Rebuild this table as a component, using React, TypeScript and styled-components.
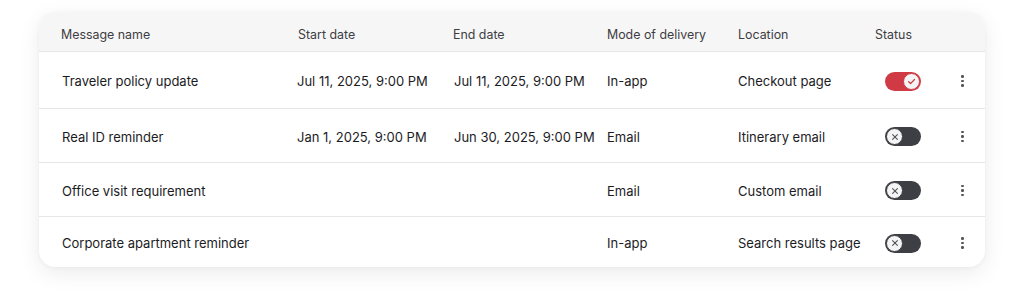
import React from 'react';
import styled, { createGlobalStyle, css } from 'styled-components';

const GlobalStyle = createGlobalStyle`
  html, body {
    margin: 0;
    padding: 0;
    background: #ffffff;
    font-family: Inter, "Noto Sans", "Liberation Sans", sans-serif;
    -webkit-font-smoothing: antialiased;
  }
`;

const Page = styled.div`
  width: 1024px;
  height: 303px;
  box-sizing: border-box;
  padding: 12px 39px 0 39px;
`;

const Card = styled.div`
  background: #fff;
  border-radius: 16px;
  overflow: hidden;
  box-shadow: 0 6px 22px rgba(0, 0, 0, 0.08), 0 1px 4px rgba(0, 0, 0, 0.04);
`;

const columns = '237px 155px 154px 131px 137px 86px 1fr';

const HeaderRow = styled.div`
  display: grid;
  grid-template-columns: ${columns};
  align-items: center;
  box-sizing: border-box;
  height: 40px;
  padding: 5px 0 0 22px;
  background: #f6f6f7;
  border-bottom: 1px solid #e6e6e8;
`;

const HeaderCell = styled.div`
  font-size: 12.4px;
  color: #3d3d42;
  white-space: nowrap;
`;

const Row = styled.div<{ $last?: boolean; $height: number }>`
  display: grid;
  grid-template-columns: ${columns};
  align-items: center;
  box-sizing: border-box;
  height: ${({ $height }) => $height}px;
  padding: 2px 0 0 22px;
  ${({ $last }) =>
    !$last &&
    css`
      border-bottom: 1px solid #e6e6e8;
    `}
`;

const Cell = styled.div<{ $shift?: number }>`
  font-size: 13px;
  color: #1c1c1f;
  white-space: nowrap;
  margin-left: ${({ $shift }) => $shift ?? 0}px;
`;

const Toggle = styled.div<{ $on: boolean }>`
  position: relative;
  width: 36px;
  height: 19px;
  margin-left: 10px;
  border-radius: 10px;
  background: ${({ $on }) => ($on ? '#cf3a44' : '#3e3f44')};
`;

const Knob = styled.div<{ $on: boolean }>`
  position: absolute;
  top: 1px;
  ${({ $on }) => ($on ? 'right: 1px;' : 'left: 1px;')}
  width: 17px;
  height: 17px;
  box-sizing: border-box;
  border-radius: 50%;
  background: #f4f4f5;
  border: 1.5px solid ${({ $on }) => ($on ? '#cf3a44' : '#3e3f44')};
  display: flex;
  align-items: center;
  justify-content: center;
`;

const Kebab = styled.div`
  display: flex;
  flex-direction: column;
  align-items: center;
  gap: 2px;
  width: 3px;
  span {
    width: 2.5px;
    height: 2.5px;
    border-radius: 50%;
    background: #55555a;
  }
`;

const Check = () => (
  <svg width="9" height="9" viewBox="0 0 10 10" fill="none">
    <path d="M1.8 5.2 L4 7.3 L8.3 2.8" stroke="#cf3a44" strokeWidth="1.4" strokeLinecap="round" strokeLinejoin="round" />
  </svg>
);

const Cross = () => (
  <svg width="8" height="8" viewBox="0 0 10 10" fill="none">
    <path d="M2 2 L8 8 M8 2 L2 8" stroke="#55565b" strokeWidth="1.4" strokeLinecap="round" />
  </svg>
);

type Message = {
  name: string;
  start: string;
  end: string;
  mode: string;
  location: string;
  on: boolean;
  height: number;
};

const messages: Message[] = [
  { name: 'Traveler policy update', start: 'Jul 11, 2025, 9:00 PM', end: 'Jul 11, 2025, 9:00 PM', mode: 'In-app', location: 'Checkout page', on: true, height: 57 },
  { name: 'Real ID reminder', start: 'Jan 1, 2025, 9:00 PM', end: 'Jun 30, 2025, 9:00 PM', mode: 'Email', location: 'Itinerary email', on: false, height: 54 },
  { name: 'Office visit requirement', start: '', end: '', mode: 'Email', location: 'Custom email', on: false, height: 54 },
  { name: 'Corporate apartment reminder', start: '', end: '', mode: 'In-app', location: 'Search results page', on: false, height: 50 },
];

export default function App() {
  return (
    <>
      <GlobalStyle />
      <Page>
        <Card>
          <HeaderRow>
            <HeaderCell>Message name</HeaderCell>
            <HeaderCell>Start date</HeaderCell>
            <HeaderCell>End date</HeaderCell>
            <HeaderCell>Mode of delivery</HeaderCell>
            <HeaderCell>Location</HeaderCell>
            <HeaderCell>Status</HeaderCell>
            <HeaderCell />
          </HeaderRow>
          {messages.map((m, i) => (
            <Row key={m.name} $height={m.height} $last={i === messages.length - 1}>
              <Cell $shift={1}>{m.name}</Cell>
              <Cell $shift={-1}>{m.start}</Cell>
              <Cell $shift={1}>{m.end}</Cell>
              <Cell>{m.mode}</Cell>
              <Cell>{m.location}</Cell>
              <Toggle $on={m.on}>
                <Knob $on={m.on}>{m.on ? <Check /> : <Cross />}</Knob>
              </Toggle>
              <Kebab>
                <span />
                <span />
                <span />
              </Kebab>
            </Row>
          ))}
        </Card>
      </Page>
    </>
  );
}
